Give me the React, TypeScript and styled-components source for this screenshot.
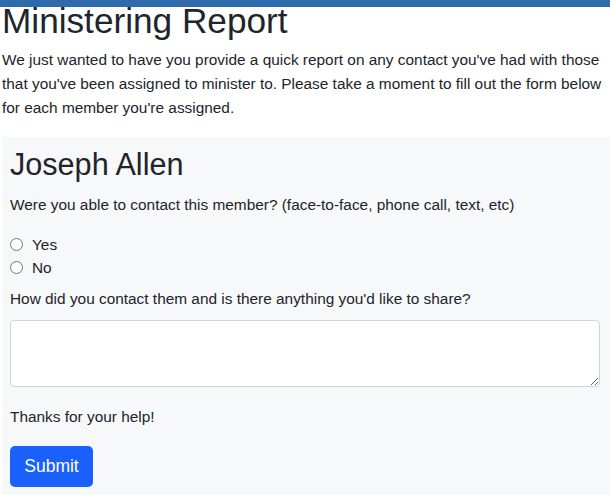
import React from 'react'
import styled, { createGlobalStyle } from 'styled-components'

const GlobalStyle = createGlobalStyle`
  body {
    margin: 0;
    background: #fff;
    color: #212529;
    font-family: "Liberation Sans", Arial, sans-serif;
    font-size: 15.4px;
    line-height: 24px;
  }
  * { box-sizing: border-box; }
`

// blue strip pinned over the top of the page
const TopBar = styled.div`
  position: fixed;
  top: 0;
  left: 0;
  right: 0;
  height: 7px;
  background: #2f6aac;
  z-index: 10;
`

const Page = styled.main`
  padding: 0 0 0 2px;
  overflow: hidden;
`

const Title = styled.h1`
  margin: 0;
  font-size: 35.2px;
  font-weight: 400;
  line-height: 42px;
`

const Intro = styled.p`
  margin: 6px 0 17px;
  padding-right: 6px;
`

const Card = styled.section`
  background: #f7f8fa;
  padding: 9px 10px 20px 8px;
`

const Name = styled.h2`
  margin: 0 0 11px;
  font-size: 30.6px;
  font-weight: 400;
  line-height: 36px;
`

const Question = styled.p<{ $after: number }>`
  margin: 0 0 ${(p) => p.$after}px;
`

const RadioGroup = styled.div`
  display: flex;
  flex-direction: column;
  margin-bottom: 8px;
`

const RadioRow = styled.label`
  display: flex;
  align-items: center;
  gap: 9px;
  height: 23px;
`

const Radio = styled.input.attrs({ type: 'radio' })`
  appearance: none;
  margin: 0;
  width: 13px;
  height: 13px;
  border: 1px solid #767676;
  border-radius: 50%;
  background: #fff;
`

const Notes = styled.textarea`
  display: block;
  width: 590px;
  height: 67px;
  margin: 9px 0 18px;
  border: 1px solid #ced4da;
  border-radius: 4px;
  background: #fff;
  font: inherit;
  resize: vertical;
`

const SubmitButton = styled.button`
  display: flex;
  align-items: center;
  justify-content: center;
  width: 83px;
  height: 41px;
  margin-top: 17px;
  border: none;
  border-radius: 5px;
  background: #1960fd;
  color: #fff;
  font-family: inherit;
  font-size: 17.5px;
`

export default function App() {
  return (
    <>
      <GlobalStyle />
      <TopBar />
      <Page>
        <Title>Ministering Report</Title>
        <Intro>
          We just wanted to have you provide a quick report on any contact you've had with those
          that you've been assigned to minister to. Please take a moment to fill out the form below
          for each member you're assigned.
        </Intro>
        <Card>
          <Name>Joseph Allen</Name>
          <Question $after={16}>
            Were you able to contact this member? (face-to-face, phone call, text, etc)
          </Question>
          <RadioGroup>
            <RadioRow>
              <Radio name="contacted" value="yes" />
              Yes
            </RadioRow>
            <RadioRow>
              <Radio name="contacted" value="no" />
              No
            </RadioRow>
          </RadioGroup>
          <Question $after={0}>
            How did you contact them and is there anything you'd like to share?
          </Question>
          <Notes />
          <Question $after={0}>Thanks for your help!</Question>
          <SubmitButton>Submit</SubmitButton>
        </Card>
      </Page>
    </>
  )
}
